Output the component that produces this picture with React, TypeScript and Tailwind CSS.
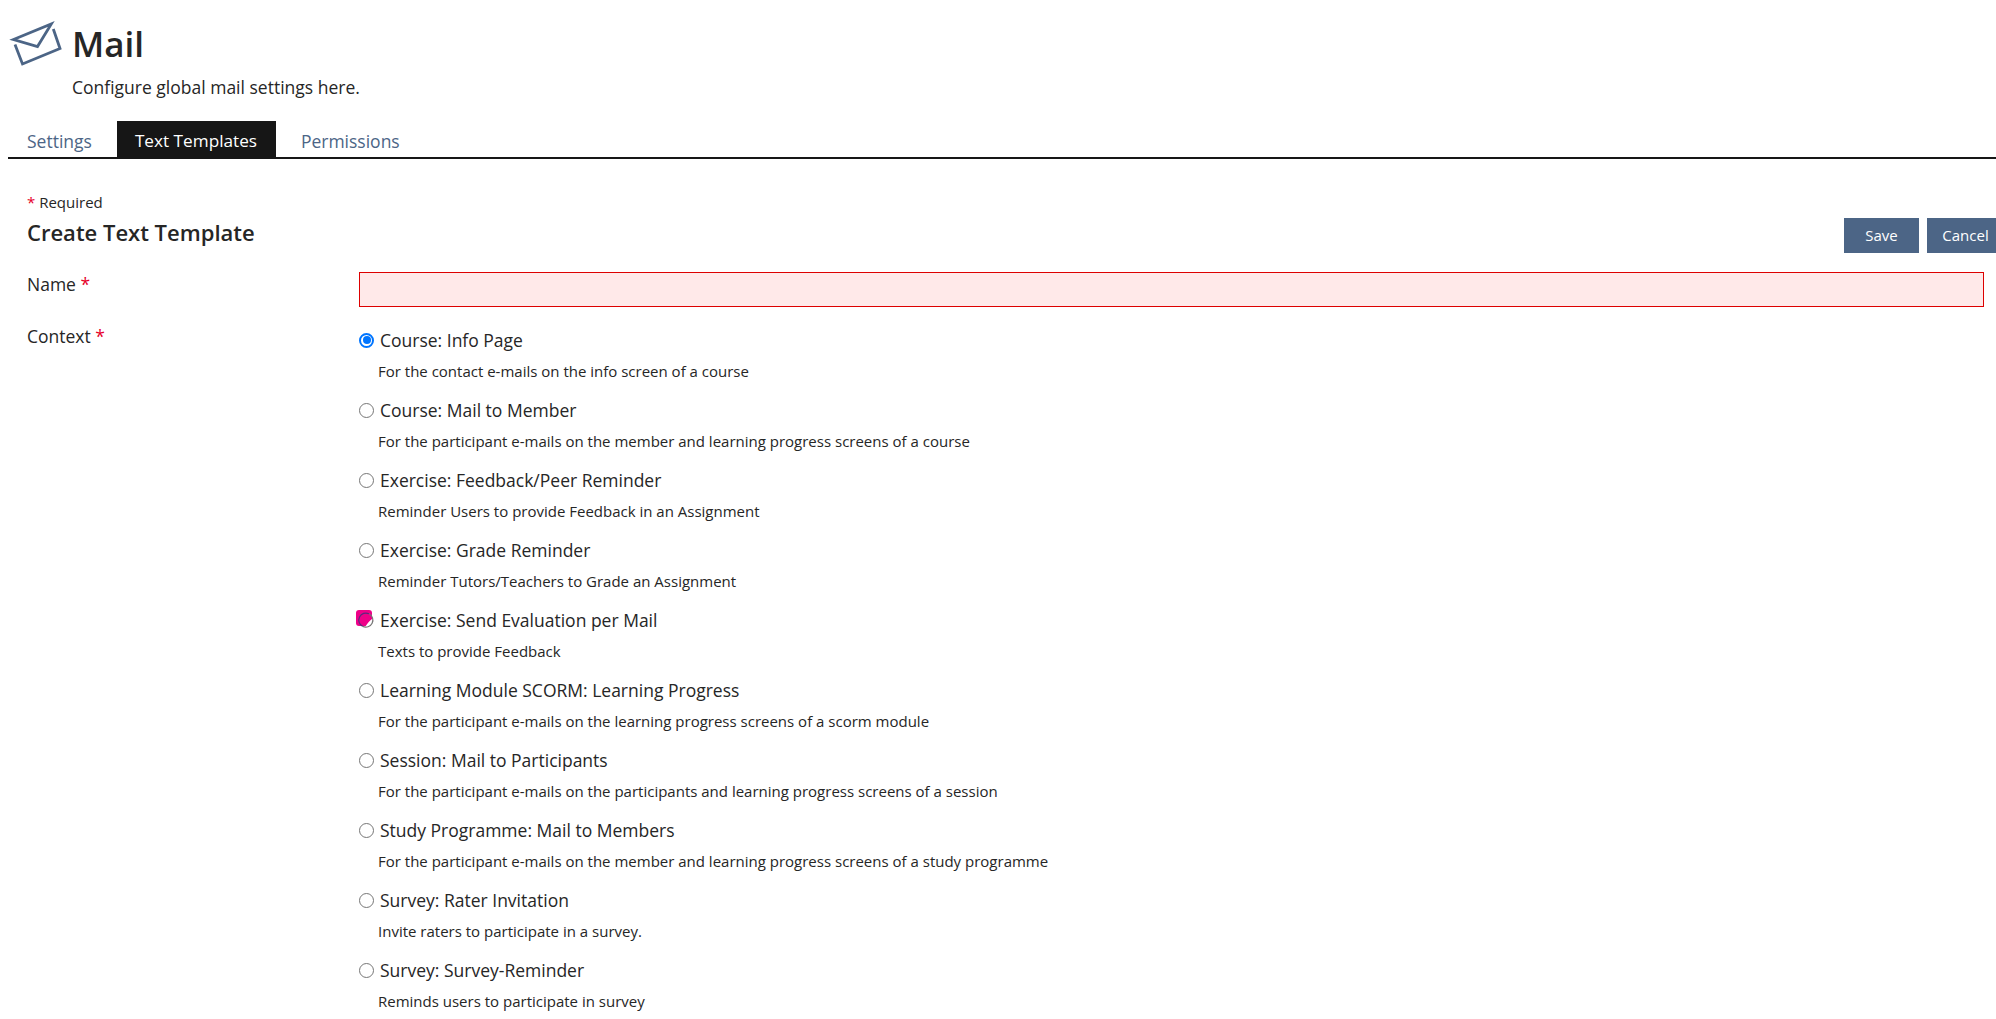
import React from 'react';

interface ContextOption {
  label: string;
  desc: string;
  checked?: boolean;
  marked?: boolean;
}

const CONTEXTS: ContextOption[] = [
  { label: 'Course: Info Page', desc: 'For the contact e-mails on the info screen of a course', checked: true },
  { label: 'Course: Mail to Member', desc: 'For the participant e-mails on the member and learning progress screens of a course' },
  { label: 'Exercise: Feedback/Peer Reminder', desc: 'Reminder Users to provide Feedback in an Assignment' },
  { label: 'Exercise: Grade Reminder', desc: 'Reminder Tutors/Teachers to Grade an Assignment' },
  { label: 'Exercise: Send Evaluation per Mail', desc: 'Texts to provide Feedback', marked: true },
  { label: 'Learning Module SCORM: Learning Progress', desc: 'For the participant e-mails on the learning progress screens of a scorm module' },
  { label: 'Session: Mail to Participants', desc: 'For the participant e-mails on the participants and learning progress screens of a session' },
  { label: 'Study Programme: Mail to Members', desc: 'For the participant e-mails on the member and learning progress screens of a study programme' },
  { label: 'Survey: Rater Invitation', desc: 'Invite raters to participate in a survey.' },
  { label: 'Survey: Survey-Reminder', desc: 'Reminds users to participate in survey' },
];

const MailIcon = () => (
  <svg width="52" height="44" viewBox="0 0 52 44" fill="none" stroke="#4c6586" strokeWidth="2.8" className="shrink-0 overflow-visible">
    <path d="M5.5 17.5 L43.3 2 L29.5 24.5 Z" />
    <path d="M7 22.5 L14.5 42 L52 26.5 L45.3 7" />
  </svg>
);

const RadioMark = ({ checked, marked }: { checked?: boolean; marked?: boolean }) => (
  <span className="relative block w-[15px] h-[15px] shrink-0">
    {checked ? (
      <span className="absolute inset-0 rounded-full border-2 border-[#0075ff] flex items-center justify-center">
        <span className="block w-[8px] h-[8px] rounded-full bg-[#0075ff]" />
      </span>
    ) : !marked ? (
      <span className="absolute inset-0 rounded-full border border-[#767676]" />
    ) : (
      // highlighter scribble over the radio
      <svg width="21" height="21" viewBox="0 0 21 21" fill="none" className="absolute -left-[3px] -top-[3px]">
        <rect x="0" y="0" width="16" height="16" rx="3" fill="#ee0088" />
        <path d="M17 5 L16 9 Q13 11 9 17 L21 21 L21 5 Z" fill="#ffffff" />
        <path d="M13 3.8 A7 7 0 1 0 6.7 16.4" stroke="#5b2a7e" strokeWidth="1.2" />
        <path d="M6.7 16.4 A7 7 0 0 0 13 3.8" stroke="#767676" strokeWidth="1.2" />
      </svg>
    )}
  </span>
);

export default function App() {
  return (
    <div className="h-screen overflow-hidden bg-white text-[#262626] font-['Open_Sans',sans-serif]">
      <div className="pl-2 pt-[22px]">
        <div className="flex items-center gap-[12px]">
          <MailIcon />
          <h1 className="text-[35px] leading-[44px] font-semibold">Mail</h1>
        </div>
        <p className="ml-[64px] text-[17.5px] leading-6 mt-[9px]">Configure global mail settings here.</p>
      </div>
      <div className="ml-2 mt-[22px] flex h-[38px] border-b-2 border-[#161616] text-[17.5px]">
        <div className="pl-[19px] pr-[25px] pt-[7px] text-[#4c6586]">Settings</div>
        <div className="w-[159px] pl-[18px] pt-[7px] bg-[#161616] text-white text-[17.2px]">Text Templates</div>
        <div className="pl-[25px] pt-[7px] text-[#4c6586]">Permissions</div>
      </div>
      <div className="pl-[27px] pt-[33px]">
        <div className="text-[15px] leading-5"><span className="text-[#e6002a]">*</span> Required</div>
        <div className="flex justify-between">
          <h2 className="text-[22px] leading-7 font-semibold mt-[6px]">Create Text Template</h2>
          <div className="flex gap-2 mt-[6px] -mr-[8px]">
            <button className="h-[35px] w-[75px] bg-[#4c6586] text-white text-[15px]">Save</button>
            <button className="h-[35px] w-[77px] bg-[#4c6586] text-white text-[15px]">Cancel</button>
          </div>
        </div>
        <div className="flex mt-[19px]">
          <div className="w-[332px] text-[17.5px] leading-6">Name <span className="text-[#e6002a]">*</span></div>
          <input className="flex-1 mr-[12px] h-[35px] border border-[#dd0000] bg-[#ffe9e9] outline-none" />
        </div>
        <div className="flex mt-[17px]">
          <div className="w-[332px] text-[17.5px] leading-6">Context <span className="text-[#e6002a]">*</span></div>
          <div className="flex flex-col pt-[4px]">
            {CONTEXTS.map(option => (
              <div key={option.label} className="h-[70px]">
                <div className="flex items-center gap-[6px] h-6">
                  <RadioMark checked={option.checked} marked={option.marked} />
                  <span className="text-[17.5px] leading-6">{option.label}</span>
                </div>
                <div className="mt-[9px] ml-[19px] text-[15px] leading-5">{option.desc}</div>
              </div>
            ))}
          </div>
        </div>
      </div>
    </div>
  );
}
